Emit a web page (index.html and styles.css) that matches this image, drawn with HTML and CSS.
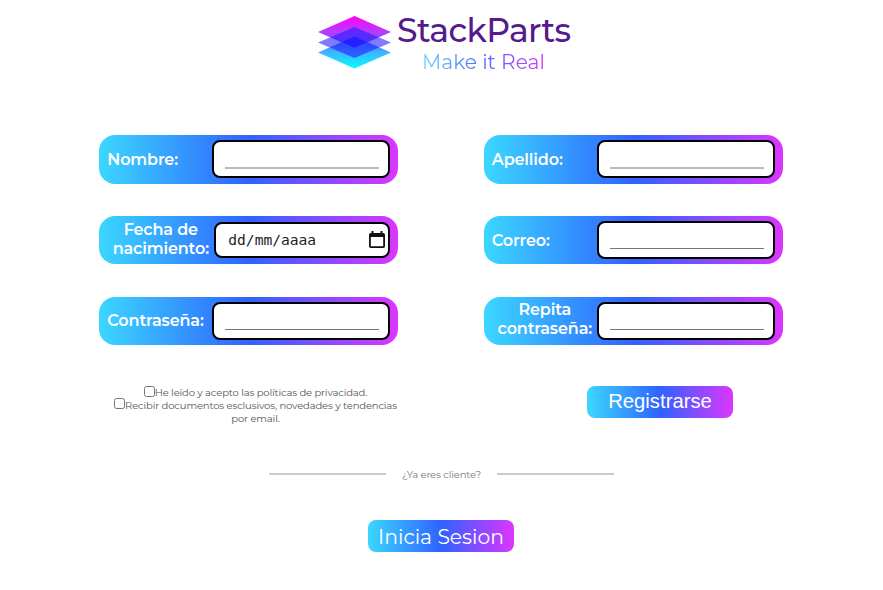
FILE: index.html
```html
<!DOCTYPE html>
<html lang="es">
<head>
<meta charset="utf-8">
<title>StackParts</title>
<link rel="stylesheet" href="styles.css">
</head>
<body>
<header class="brand">
  <svg class="logo" width="75" height="54" viewBox="0 0 75 54" aria-hidden="true">
    <defs>
      <linearGradient id="top" x1="0" y1="0" x2="0" y2="1">
        <stop offset="0" stop-color="#ff00f8"/><stop offset=".5" stop-color="#b53cff"/><stop offset="1" stop-color="#6b55ff"/>
      </linearGradient>
      <linearGradient id="base" x1="0" y1="0" x2="0" y2="1">
        <stop offset="0" stop-color="#3c5cff"/><stop offset=".5" stop-color="#40b4ff"/><stop offset="1" stop-color="#00ffff"/>
      </linearGradient>
    </defs>
    <path fill="url(#base)" d="M37.5 21.5 74 37.5 37.5 53.500 1 37.5Z"/>
    <path fill="url(#top)" d="M37.5 1 74 17 37.5 33 1 17Z"/>
    <path fill="#201cff" fill-opacity=".58" d="M37.5 12 74 27.5 37.5 43 1 27.5Z"/>
    <path fill="#1418ff" fill-opacity=".7" d="M37.5 21.5 50 27 37.5 32.5 25 27Z"/>
  </svg>
  <div class="brand-text">
    <div class="name">StackParts</div>
    <div class="slogan">Make it Real</div>
  </div>
</header>
<form>
  <div class="fields">
    <label class="card"><span class="label">Nombre:</span><span class="box"><span class="line"></span></span></label>
    <label class="card"><span class="label">Apellido:</span><span class="box"><span class="line"></span></span></label>
    <label class="card"><span class="label two">Fecha de<br>nacimiento:</span><span class="box date">dd/mm/aaaa
      <svg width="16" height="18" viewBox="0 0 16 18" aria-hidden="true"><path fill="#111" fill-rule="evenodd" d="M2.5 0h2v2h7V0h2v2h.7Q16 2 16 3.800v11.400Q16 17 14.200 17H1.800Q0 17 0 15.200V3.800Q0 2 1.800 2h.7ZM1.800 6v9.200h12.400v-9.200Z"/></svg></span></label>
    <label class="card"><span class="label">Correo:</span><span class="box"><span class="line thin"></span></span></label>
    <label class="card"><span class="label">Contraseña:</span><span class="box"><span class="line thin"></span></span></label>
    <label class="card"><span class="label two">Repita<br>contraseña:</span><span class="box"><span class="line thin"></span></span></label>
  </div>
  <div class="actions">
    <div class="terms">
      <div class="term"><input type="checkbox"><span>He leído y acepto las políticas de privacidad.</span></div>
      <div class="term"><input type="checkbox"><span>Recibir documentos esclusivos, novedades y tendencias</span></div>
      <div class="term"><span>por email.</span></div>
    </div>
    <button class="btn register" type="button">Registrarse</button>
  </div>
</form>
<div class="divider"><span class="rule"></span><span class="ask">¿Ya eres cliente?</span><span class="rule"></span></div>
<button class="btn login" type="button">Inicia Sesion</button>
</body>
</html>
```
FILE: styles.css
```css
* { box-sizing: border-box; }
body {
  margin: 0;
  height: 590px;
  overflow: hidden;
  background: #fff;
  font-family: Montserrat, Inter, sans-serif;
}
.brand { display: flex; padding: 15px 0 0 317px; height: 135px; }
.logo { flex: none; }
.brand-text { margin: -5px 0 0 5px; width: 174px; white-space: nowrap; }
.name { height: 40px; line-height: 40px; font-size: 33px; letter-spacing: -.6px; font-weight: 500; color: #551a8b; }
.slogan {
  width: 125px;
  height: 24px;
  margin-left: 25px;
  line-height: 24px;
  font-size: 20.200px;
  font-weight: 400;
  background: linear-gradient(90deg, #77d6ff, #4d6cff 45%, #dc35ff);
  -webkit-background-clip: text;
  background-clip: text;
  color: transparent;
}
.fields {
  display: grid;
  grid-template-columns: 299px 299px;
  column-gap: 85.500px;
  grid-auto-rows: 48.500px;
  row-gap: 32.300px;
  margin-left: 99.300px;
}
.card, .btn { background: linear-gradient(90deg, #3bd7ff, #2f63ff 50%, #dc35ff); }
.card {
  display: flex;
  align-items: center;
  justify-content: space-between;
  padding: 0 8px;
  border-radius: 16px;
}
.label { color: #fff; font-size: 16px; line-height: 19px; font-weight: 600; letter-spacing: -.12px; white-space: nowrap; }
.two { width: 106px; text-align: center; padding-left: 1px; margin-top: -3px; }
.box {
  flex: none;
  width: 178px;
  height: 38px;
  border: 2px solid #000;
  border-radius: 8px;
  background: #fff;
  padding: 25px 9px 0 11px;
}
.line { display: block; height: 2px; background: #bbb; }
.thin { height: 1px; background: #777; }
.date {
  display: flex;
  align-items: center;
  justify-content: space-between;
  width: 176px;
  height: 36px;
  margin-top: -1px;
  padding: 0 3px 0 12px;
  font: 14.600px "DejaVu Sans Mono", monospace;
  color: #222;
}
.actions { display: flex; height: 119px; padding-top: 40.500px; }
.terms { width: 313px; margin-left: 99px; padding-top: .8px; font-size: 10px; letter-spacing: -.14px; color: #555; white-space: nowrap; }
.term { display: flex; height: 12.700px; align-items: center; justify-content: center; }
.term input { margin: -3px 0 0; width: 11px; height: 11px; }
.btn {
  display: block;
  width: 146px;
  height: 32px;
  padding: 0;
  border: 0;
  border-radius: 8px;
  color: #fff;
  font: 20.300px Montserrat, Inter, sans-serif;
  white-space: nowrap;
}
.register { margin-left: 175px; font-family: "Liberation Sans", sans-serif; }
.divider { display: flex; align-items: center; justify-content: space-between; width: 345px; height: 14px; margin: 3px 0 0 269px; }
.rule { width: 117px; height: 2px; background: #ccc; }
.ask { font-size: 10px; letter-spacing: -.14px; color: #777; }
.login { margin: 39px 0 0 368px; }
```
